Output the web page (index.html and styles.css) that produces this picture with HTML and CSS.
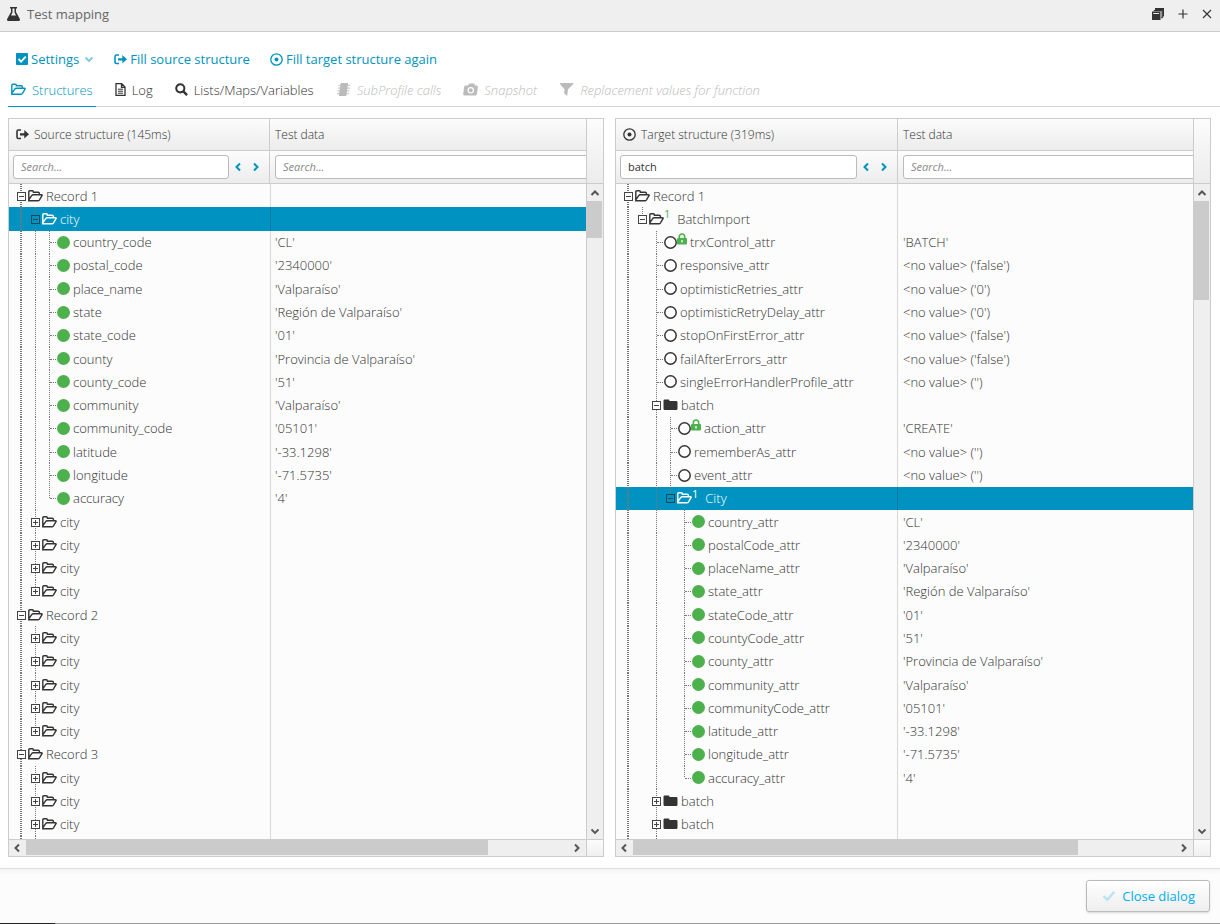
FILE: index.html
```html
<!DOCTYPE html>
<html lang="en">
<head>
<meta charset="UTF-8">
<meta name="viewport" content="width=device-width,initial-scale=1.0">
<title>Test mapping</title>
<link rel="stylesheet" href="styles.css">
</head>
<body>
<svg class="defs" aria-hidden="true">
  <symbol id="flask" viewBox="0 0 13 14"><path d="M3 0h7v1.500H9V5l3.600 6.500c.8 1.400.2 2.500-1.200 2.500H1.600C.2 14-.4 12.900.4 11.500L4 5V1.500H3z" fill="currentColor"/><path d="M5.500 1.500h2v4L9 8.500H4l1.500-3z" fill="#efefef"/></symbol>
  <symbol id="windows" viewBox="0 0 12 12"><path d="M3 0h9v8.500h-1.200V2H3z" fill="currentColor"/><path d="M1.800 2.600h8.400v7h-1" fill="none" stroke="currentColor" stroke-width="1.300"/><path d="M0 3.500h8.500V12H0z" fill="currentColor"/><path d="M1.300 5h5.800v.9H1.300z" fill="#fff"/></symbol>
  <symbol id="plus" viewBox="0 0 10 10"><path d="M5 .5v9M.5 5h9" stroke="currentColor" stroke-width="1.200"/></symbol>
  <symbol id="cross" viewBox="0 0 10 10"><path d="M1 1l8 8M9 1L1 9" stroke="currentColor" stroke-width="1.100"/></symbol>
  <symbol id="check-box" viewBox="0 0 12 12"><rect width="12" height="12" rx="1" fill="currentColor"/><path d="M2.500 6l2.600 2.600L9.700 3.700" fill="none" stroke="#fff" stroke-width="1.800"/></symbol>
  <symbol id="down" viewBox="0 0 10 10"><path d="M1.500 3.500L5 7l3.500-3.500" fill="none" stroke="currentColor" stroke-width="1.800"/></symbol>
  <symbol id="left" viewBox="0 0 10 10"><path d="M7 1.500L3.500 5 7 8.500" fill="none" stroke="currentColor" stroke-width="2"/></symbol>
  <symbol id="right" viewBox="0 0 10 10"><path d="M3 1.500L6.500 5 3 8.500" fill="none" stroke="currentColor" stroke-width="2"/></symbol>
  <symbol id="up" viewBox="0 0 10 10"><path d="M1.500 7L5 3.500 8.500 7" fill="none" stroke="currentColor" stroke-width="2"/></symbol>
  <symbol id="exit" viewBox="0 0 13 12"><path d="M5 1.500H2.500Q1 1.500 1 3v5.500Q1 10 2.500 10H5" fill="none" stroke="currentColor" stroke-width="1.600"/><path d="M4 4.700h4.300V1.500L13 5.800 8.300 10V6.900H4z" fill="currentColor"/></symbol>
  <symbol id="target" viewBox="0 0 13 13"><circle cx="6.500" cy="6.500" r="5.700" fill="none" stroke="currentColor" stroke-width="1.300"/><circle cx="6.500" cy="6.500" r="2" fill="currentColor"/></symbol>
  <symbol id="folder-open" viewBox="0 0 15 12"><path d="M.8 9.600V2q0-1.200 1.200-1.200h2.400q1 0 1 1.400h4.800q1.200 0 1.200 1.200v1.200M.8 9.800L3.700 5.600q.6-.8 1.500-.8h8.300q1 0 .5.900L11.500 9.800q-.6.900-1.600.9H1.800Q.5 10.700.8 9.600z" fill="none" stroke="currentColor" stroke-width="1.400"/></symbol>
  <symbol id="folder" viewBox="0 0 14 12"><path d="M0 1.800Q0 .6 1.200.6h3.600Q6 .6 6 2h6.600Q14 2 14 3.300v6.400q0 1.300-1.400 1.300H1.400Q0 11 0 9.700z" fill="currentColor"/></symbol>
  <symbol id="file" viewBox="0 0 11 13"><path d="M1 .7h5.800L10 4v8.300H1zM6.500.7v3.600H10" fill="none" stroke="currentColor" stroke-width="1.300"/><path d="M3 6.200h5M3 8.200h5M3 10.200h5" stroke="currentColor"/></symbol>
  <symbol id="search" viewBox="0 0 14 14"><circle cx="5.700" cy="5.700" r="4.400" fill="none" stroke="currentColor" stroke-width="2.200"/><path d="M9 9l4 4" stroke="currentColor" stroke-width="2.600"/></symbol>
  <symbol id="chip" viewBox="0 0 15 14"><path d="M4.500 0h8l-2 14h-8z" fill="currentColor"/><path d="M2 2.500h13M1.500 5.500h13M1 8.500h13M.5 11.500h13" stroke="currentColor"/></symbol>
  <symbol id="camera" viewBox="0 0 15 13"><path d="M2.500 2.500H5L6.300.5h5L12 2.500h1.500q1.600 0 1.400 1.500l-1 7q-.2 1.500-1.700 1.500h-10Q0 12.500.2 11l.9-7q.2-1.500 1.400-1.500z" fill="currentColor"/><circle cx="7.800" cy="7.300" r="2.700" fill="none" stroke="#fff" stroke-width="1.200"/></symbol>
  <symbol id="filter" viewBox="0 0 14 13"><path d="M.8 0H14q0 .8-.7 1.500L8.500 6.300 7.700 13 4.500 10.300l.6-4L.8 1.500Q.3.800.8 0z" fill="currentColor"/></symbol>
  <symbol id="tick" viewBox="0 0 14 12"><path d="M1.500 6l3.800 3.800 7-8" fill="none" stroke="currentColor" stroke-width="2.400"/></symbol>
  <symbol id="dot" viewBox="0 0 13 13"><circle cx="6.500" cy="6.500" r="6.500" fill="#4cb04c"/></symbol>
  <symbol id="ring" viewBox="0 0 13 13"><circle cx="6.500" cy="6.500" r="5.700" fill="#fff" stroke="currentColor" stroke-width="1.500"/></symbol>
  <symbol id="lock" viewBox="0 0 10 12"><path d="M2.300 6V3.700a2.700 2.700 0 015.400 0V6" fill="none" stroke="#4cb04c" stroke-width="1.600"/><rect y="5" width="10" height="6.500" rx="1" fill="#4cb04c"/><path d="M5 7v2.500" stroke="#fff" stroke-width="1.300"/></symbol>
</svg>

<header class="titlebar">
  <svg class="flask"><use href="#flask"/></svg>
  <h1>Test mapping</h1>
  <button type="button" aria-label="Restore"><svg class="i12"><use href="#windows"/></svg></button>
  <button type="button" aria-label="Maximize"><svg class="i10"><use href="#plus"/></svg></button>
  <button type="button" aria-label="Close"><svg class="i10"><use href="#cross"/></svg></button>
</header>

<main>
  <div class="toolbar">
    <button type="button"><svg class="i12"><use href="#check-box"/></svg>Settings<svg class="i10 caret"><use href="#down"/></svg></button>
    <button type="button"><svg class="i13"><use href="#exit"/></svg>Fill source structure</button>
    <button type="button"><svg class="i13"><use href="#target"/></svg>Fill target structure again</button>
  </div>

  <nav class="tabs">
    <button type="button" class="active"><svg class="i15"><use href="#folder-open"/></svg>Structures</button>
    <button type="button"><svg class="file"><use href="#file"/></svg>Log</button>
    <button type="button"><svg class="i13"><use href="#search"/></svg>Lists/Maps/Variables</button>
    <button type="button" disabled><svg class="i15"><use href="#chip"/></svg>SubProfile calls</button>
    <button type="button" disabled><svg class="i15"><use href="#camera"/></svg>Snapshot</button>
    <button type="button" disabled><svg class="i15"><use href="#filter"/></svg>Replacement values for function</button>
  </nav>

  <div class="panels">
    <section class="panel source">
      <div class="head">
        <div class="title"><svg class="i13"><use href="#exit"/></svg>Source structure (145ms)</div>
        <div class="title">Test data</div>
        <div class="find">
          <input type="text" placeholder="Search..." aria-label="Search source structure">
          <button type="button" aria-label="Previous"><svg class="i10"><use href="#left"/></svg></button>
          <button type="button" aria-label="Next"><svg class="i10"><use href="#right"/></svg></button>
        </div>
        <div class="find wide"><input type="text" placeholder="Search..." aria-label="Search source test data"></div>
      </div>
      <div class="corner-top"></div>
      <div class="body"><table><tbody id="sourceRows"></tbody></table></div>
      <div class="vbar">
        <button type="button" aria-label="Scroll up"><svg class="i10"><use href="#up"/></svg></button>
        <div class="track"><div class="thumb"></div></div>
        <button type="button" aria-label="Scroll down"><svg class="i10"><use href="#down"/></svg></button>
      </div>
      <div class="hbar">
        <button type="button" aria-label="Scroll left"><svg class="i10"><use href="#left"/></svg></button>
        <div class="track"><div class="thumb"></div></div>
        <button type="button" aria-label="Scroll right"><svg class="i10"><use href="#right"/></svg></button>
      </div>
      <div class="corner"></div>
    </section>

    <section class="panel dest">
      <div class="head">
        <div class="title"><svg class="i13"><use href="#target"/></svg>Target structure (319ms)</div>
        <div class="title">Test data</div>
        <div class="find">
          <input type="text" value="batch" placeholder="Search..." aria-label="Search target structure">
          <button type="button" aria-label="Previous"><svg class="i10"><use href="#left"/></svg></button>
          <button type="button" aria-label="Next"><svg class="i10"><use href="#right"/></svg></button>
        </div>
        <div class="find wide"><input type="text" placeholder="Search..." aria-label="Search target test data"></div>
      </div>
      <div class="corner-top"></div>
      <div class="body"><table><tbody id="targetRows"></tbody></table></div>
      <div class="vbar">
        <button type="button" aria-label="Scroll up"><svg class="i10"><use href="#up"/></svg></button>
        <div class="track"><div class="thumb"></div></div>
        <button type="button" aria-label="Scroll down"><svg class="i10"><use href="#down"/></svg></button>
      </div>
      <div class="hbar">
        <button type="button" aria-label="Scroll left"><svg class="i10"><use href="#left"/></svg></button>
        <div class="track"><div class="thumb"></div></div>
        <button type="button" aria-label="Scroll right"><svg class="i10"><use href="#right"/></svg></button>
      </div>
      <div class="corner"></div>
    </section>
  </div>
</main>

<footer>
  <button type="button" class="close"><svg class="tick"><use href="#tick"/></svg>Close dialog</button>
</footer>
<div class="progress"><div></div></div>
<script src="script.js"></script>
</body>
</html>
```

FILE: styles.css
```css
*{box-sizing:border-box}
body{margin:0;height:100vh;display:flex;flex-direction:column;font:300 13px/18px "Open Sans",sans-serif;color:#333;background:#fff}
svg{flex:none;display:block}
.defs{position:absolute;width:0;height:0}
button{display:flex;align-items:center;justify-content:center;padding:0;border:0;background:none;font:inherit;color:inherit;cursor:pointer}
.i10{width:10px;height:10px}
.i12{width:12px;height:12px}
.i13{width:13px;height:13px}
.i15{width:15px;height:13px}

.titlebar{display:flex;align-items:center;gap:14px;height:32px;padding:0 8px 3px 7px;background:#efefef;border-bottom:1px solid #ccc}
.titlebar h1{flex:1;margin:0 0 0 -7px;font-size:13px;font-weight:400;color:#666}
.flask{width:13px;height:14px}

main{flex:1;min-height:0;display:flex;flex-direction:column;padding:15px 9px 11px 8px}
.toolbar{display:flex;gap:20px;padding:0 8px;height:24px}
.toolbar button{gap:3px;font-weight:400;color:#0093c1}
.caret{margin-left:2px;opacity:.5}
.tabs{display:flex;gap:16px;height:36px;margin-right:-9px;border-bottom:1px solid #d3d3d3}
.tabs button{gap:6px;padding:2px 3px 0;margin-bottom:-1px;border-bottom:1px solid transparent}
.tabs .active{color:#0093c1;border-color:#0093c1}
.tabs button:disabled{color:#bbb;font-style:italic}
.file{width:11px;height:13px}

.panels{flex:1;min-height:0;display:flex;gap:11px;padding-top:11px}
.panel{flex:1;min-width:0;display:grid;grid-template:65px 1fr 17px/1fr 17px;border:1px solid #ccc;background:#fcfcfc}
.source{--tree:261px}
.dest{--tree:282px}
.head{display:grid;grid-template:32px 32px/var(--tree) 1fr;overflow:hidden;border-bottom:1px solid #ccc}
.head>div{min-width:0;display:flex;align-items:center;background:linear-gradient(#fcfcfc,#ececec)}
.head>div:nth-child(odd){border-right:1px solid #ccc}
.head .title{gap:5px;padding:0 5px 0 7px;font-size:12px;border-bottom:1px solid #ccc}
.head .title:nth-child(2){padding-left:5px}
.find{gap:4px;padding:0 8px 1px 4px;color:#0093c1;overflow:hidden}
.find button+button{margin-left:4px}
.find input{flex:1;min-width:0;height:24px;padding:0 7px;border:1px solid #bbb;border-radius:3px;background:#fff;font:400 11px "Open Sans",sans-serif;color:#333}
.find input::placeholder{font-style:italic;color:#888}
.find.wide{padding:0 0 1px 5px}
.wide input{margin-right:-9px}
.corner-top{border-left:1px solid #ccc;border-bottom:1px solid #ccc;background:linear-gradient(#fcfcfc,#ececec)}

.body{min-height:0;overflow:hidden}
table,tbody{display:flex;flex-direction:column;width:100%;height:100%}
tr{flex:1;min-height:0;display:flex}
.rest{flex:0 0 3px}
td{display:flex;align-items:center;padding:0;white-space:nowrap}
td:first-child{width:calc(var(--tree) + 1px);padding-left:5px;border-right:1px solid #d8d8d8}
.dest td:first-child{width:var(--tree)}
td:last-child{flex:1;padding-left:4px}
.dest td:last-child{padding-left:5px}
.selected{background:#0093c1;color:#fff}
.selected td:first-child{border-color:#017ba1}
.line{position:relative;align-self:stretch;flex:none;width:14px}
.line.full,.line.on,.line.last{background:repeating-linear-gradient(#777 0 1px,transparent 1px 2px) 7px 0/1px 100% no-repeat}
.line.last{background-size:1px 50%}
.line:first-child{background-position:6px 0;background-size:2px 100%}
.leaf.on::after,.leaf.last::after{content:"";position:absolute;left:8px;top:50%;width:6px;border-top:1px dotted #777}
.toggle{position:absolute;left:3px;top:50%;width:9px;height:9px;margin-top:-4px;border:1px solid #444;background:linear-gradient(#444,#444) center/5px 1px no-repeat #fcfcfc}
.toggle.plus{background:linear-gradient(#444,#444) center/5px 1px no-repeat,linear-gradient(#444,#444) center/1px 5px no-repeat #fcfcfc}
.selected .toggle{border-color:#064a60;background-color:#0093c1}
.icon{width:15px;height:12px}
.circle{width:13px;height:13px;margin-left:1px}
.label{margin-left:3px}
.lock{width:10px;height:12px;margin-top:-6px}
.one{align-self:flex-start;font-size:11px;font-weight:400;line-height:14px;color:#4cb04c;margin-right:4px}
.selected .one{color:#fff}

.vbar,.hbar{display:flex;background:#efefef;color:#555}
.vbar{flex-direction:column;border-left:1px solid #ccc}
.hbar{border-top:1px solid #ccc}
.vbar button{height:17px;padding-right:1px}
.hbar button{width:17px;padding-right:1px}
.track{flex:1;min-height:0}
.thumb{background:#cbcbcb}
.vbar .thumb{width:15px}
.hbar .thumb{height:15px}
.source .vbar .thumb{height:6%}
.source .hbar .thumb{width:85%}
.dest .vbar .thumb{height:16%}
.dest .hbar .thumb{width:82%}
.corner{border:solid #ccc;border-width:1px 0 0 1px;background:linear-gradient(#fcfcfc,#f0f0f0)}

footer{display:flex;justify-content:flex-end;height:55px;padding:11px 10px 11px;background:linear-gradient(#f4f4f4,#fcfcfc 5px);border-top:1px solid #ddd}
.close{gap:6px;padding:0 14px 0 15px;border:1px solid #bbb;border-radius:3px;background:linear-gradient(#fff,#eee);box-shadow:0 1px 2px rgba(0,0,0,.15);font-weight:400;color:#00aeef}
.tick{width:14px;height:12px;opacity:.25}
.progress{height:1px;background:#999}
.progress div{width:55px;height:1px;background:#222}
```

FILE: script.js
```js
// guides: one letter per tree level. f = line passes, o = own line, l = last child, space = none
// icon: open / closed / dot / ring, "+lock" and "+1" are badges
var source = [
  ['o', '-', 'open', 'Record 1', ''],
  ['fo', '-', 'open', 'city', '', true],
  ['ffo', '', 'dot', 'country_code', "'CL'"],
  ['ffo', '', 'dot', 'postal_code', "'2340000'"],
  ['ffo', '', 'dot', 'place_name', "'Valparaíso'"],
  ['ffo', '', 'dot', 'state', "'Región de Valparaíso'"],
  ['ffo', '', 'dot', 'state_code', "'01'"],
  ['ffo', '', 'dot', 'county', "'Provincia de Valparaíso'"],
  ['ffo', '', 'dot', 'county_code', "'51'"],
  ['ffo', '', 'dot', 'community', "'Valparaíso'"],
  ['ffo', '', 'dot', 'community_code', "'05101'"],
  ['ffo', '', 'dot', 'latitude', "'-33.1298'"],
  ['ffo', '', 'dot', 'longitude', "'-71.5735'"],
  ['ffl', '', 'dot', 'accuracy', "'4'"],
  ['fo', '+', 'open', 'city', ''],
  ['fo', '+', 'open', 'city', ''],
  ['fo', '+', 'open', 'city', ''],
  ['fl', '+', 'open', 'city', ''],
  ['o', '-', 'open', 'Record 2', ''],
  ['fo', '+', 'open', 'city', ''],
  ['fo', '+', 'open', 'city', ''],
  ['fo', '+', 'open', 'city', ''],
  ['fo', '+', 'open', 'city', ''],
  ['fl', '+', 'open', 'city', ''],
  ['o', '-', 'open', 'Record 3', ''],
  ['fo', '+', 'open', 'city', ''],
  ['fo', '+', 'open', 'city', ''],
  ['fo', '+', 'open', 'city', '']
];

var target = [
  ['o', '-', 'open', 'Record 1', ''],
  ['fl', '-', 'open+1', 'BatchImport', ''],
  ['f o', '', 'ring+lock', 'trxControl_attr', "'BATCH'"],
  ['f o', '', 'ring', 'responsive_attr', "<no value> ('false')"],
  ['f o', '', 'ring', 'optimisticRetries_attr', "<no value> ('0')"],
  ['f o', '', 'ring', 'optimisticRetryDelay_attr', "<no value> ('0')"],
  ['f o', '', 'ring', 'stopOnFirstError_attr', "<no value> ('false')"],
  ['f o', '', 'ring', 'failAfterErrors_attr', "<no value> ('false')"],
  ['f o', '', 'ring', 'singleErrorHandlerProfile_attr', "<no value> ('')"],
  ['f o', '-', 'closed', 'batch', ''],
  ['f fo', '', 'ring+lock', 'action_attr', "'CREATE'"],
  ['f fo', '', 'ring', 'rememberAs_attr', "<no value> ('')"],
  ['f fo', '', 'ring', 'event_attr', "<no value> ('')"],
  ['f fl', '-', 'open+1', 'City', '', true],
  ['f f o', '', 'dot', 'country_attr', "'CL'"],
  ['f f o', '', 'dot', 'postalCode_attr', "'2340000'"],
  ['f f o', '', 'dot', 'placeName_attr', "'Valparaíso'"],
  ['f f o', '', 'dot', 'state_attr', "'Región de Valparaíso'"],
  ['f f o', '', 'dot', 'stateCode_attr', "'01'"],
  ['f f o', '', 'dot', 'countyCode_attr', "'51'"],
  ['f f o', '', 'dot', 'county_attr', "'Provincia de Valparaíso'"],
  ['f f o', '', 'dot', 'community_attr', "'Valparaíso'"],
  ['f f o', '', 'dot', 'communityCode_attr', "'05101'"],
  ['f f o', '', 'dot', 'latitude_attr', "'-33.1298'"],
  ['f f o', '', 'dot', 'longitude_attr', "'-71.5735'"],
  ['f f l', '', 'dot', 'accuracy_attr', "'4'"],
  ['f o', '+', 'closed', 'batch', ''],
  ['f o', '+', 'closed', 'batch', '']
];

var icons = {
  open: '<svg class="icon"><use href="#folder-open"/></svg>',
  closed: '<svg class="icon"><use href="#folder"/></svg>',
  dot: '<svg class="circle"><use href="#dot"/></svg>',
  ring: '<svg class="circle"><use href="#ring"/></svg>',
  lock: '<svg class="lock"><use href="#lock"/></svg>',
  1: '<span class="one">1</span>'
};
var lines = {f: 'full', o: 'on', l: 'last', ' ': ''};

function escapeHtml(text) {
  return text.replace(/&/g, '&amp;').replace(/</g, '&lt;').replace(/>/g, '&gt;');
}

function renderRow(row) {
  var guides = row[0].split('').map(function(g, i, all) {
    var own = i === all.length - 1;
    var toggle = own && row[1] ? '<span class="toggle' + (row[1] === '+' ? ' plus' : '') + '"></span>' : '';
    return '<span class="line ' + lines[g] + (own && !row[1] ? ' leaf' : '') + '">' + toggle + '</span>';
  }).join('');
  var icon = row[2].split('+').map(function(name) { return icons[name]; }).join('');
  return '<tr' + (row[5] ? ' class="selected"' : '') + '><td>' + guides + icon +
    '<span class="label">' + row[3] + '</span></td><td>' + escapeHtml(row[4]) + '</td></tr>';
}

// strip under the last row, keeps the guides running to the scrollbar
function renderRest(guides) {
  return '<tr class="rest" aria-hidden="true"><td>' + guides.split('').map(function(g) {
    return '<span class="line ' + lines[g] + '"></span>';
  }).join('') + '</td><td></td></tr>';
}

document.getElementById('sourceRows').innerHTML = source.map(renderRow).join('') + renderRest('ff');
document.getElementById('targetRows').innerHTML = target.map(renderRow).join('') + renderRest('f f');
```
